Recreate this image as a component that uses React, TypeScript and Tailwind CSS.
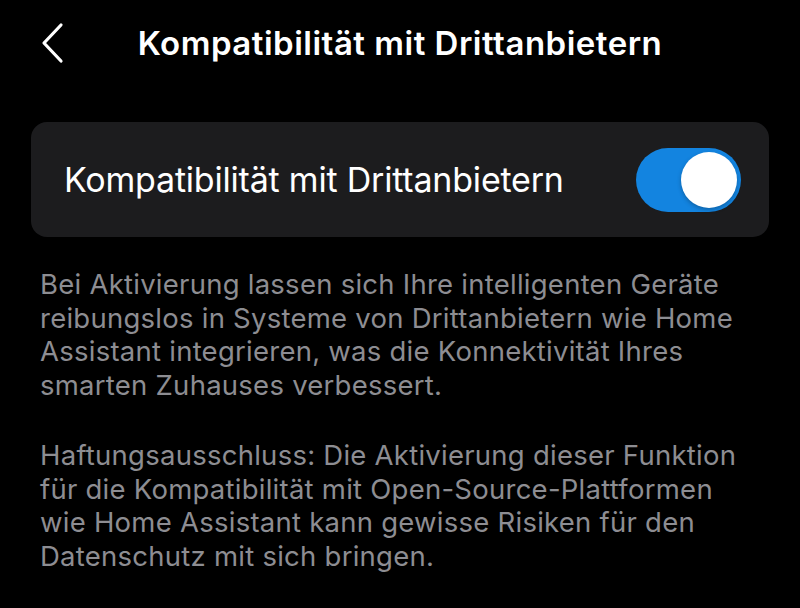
export default function App() {
  return (
    <div
      className="w-[800px] h-[608px] bg-black text-white overflow-hidden"
      style={{ fontFamily: 'Inter, "Noto Sans", sans-serif' }}
    >
      {/* Header */}
      <div className="relative h-[90px] flex justify-center pt-[27px]">
        <button className="absolute left-[38px] top-[22px] w-[28px] h-[42px] flex items-center justify-center" aria-label="Zurück">
          <svg width="26" height="42" viewBox="0 0 26 42" fill="none">
            <path d="M22 3L5 21l17 18" stroke="white" strokeWidth="3.2" strokeLinecap="round" strokeLinejoin="round" />
          </svg>
        </button>
        <h1 className="text-[33px] font-semibold tracking-[0.5px] leading-[33px] h-[33px]">Kompatibilität mit Drittanbietern</h1>
      </div>

      <div className="px-[31px] pt-[32px]">
        {/* Toggle card */}
        <div className="h-[115px] rounded-[16px] bg-[#1c1c1e] flex items-center justify-between pl-[33px] pr-[28px]">
          <span className="text-[34px] tracking-[-0.2px] leading-none">Kompatibilität mit Drittanbietern</span>
          <div className="w-[105px] h-[64px] rounded-full bg-[#1384e0] p-[4px] flex justify-end">
            <div className="w-[56px] h-[56px] rounded-full bg-white shadow-[0_2px_4px_rgba(0,0,0,0.25)]" />
          </div>
        </div>

        {/* Description */}
        <div className="pl-[9px] pr-[9px] pt-[31px] text-[27.5px] tracking-[0.25px] leading-[33.5px] text-[#8d8d92]">
          <p>
            Bei Aktivierung lassen sich Ihre intelligenten Geräte reibungslos in Systeme von Drittanbietern wie Home Assistant integrieren, was die Konnektivität Ihres smarten Zuhauses verbessert.
          </p>
          <p className="mt-[37px]">
            Haftungsausschluss: Die Aktivierung dieser Funktion für die Kompatibilität mit Open-Source-Plattformen wie Home Assistant kann gewisse Risiken für den Datenschutz mit sich bringen.
          </p>
        </div>
      </div>
    </div>
  );
}
